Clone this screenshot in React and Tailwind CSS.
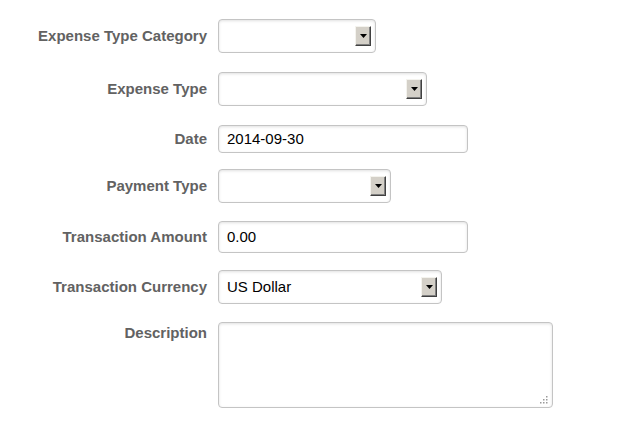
import React from 'react';

const boxBase =
  'rounded-[4px] border border-[#c4c4c4] bg-white shadow-[inset_0_1px_3px_rgba(0,0,0,0.12)]';

const DropButton = () => (
  <span className="flex h-[20px] w-[16px] items-center justify-center border border-t-[#f4f3ee] border-l-[#f4f3ee] border-r-[#404040] border-b-[#404040] bg-[#d4d0c8] shadow-[inset_-1px_-1px_0_#808080]">
    <svg width="7" height="4" viewBox="0 0 7 4">
      <path d="M0 0h7L3.5 4z" fill="#000" />
    </svg>
  </span>
);

const Select = ({ width, value }) => (
  <div className={`flex h-[34px] items-center justify-between pl-2 pr-[4px] ${boxBase} ${width}`}>
    <span className="text-[15px] text-black">{value}</span>
    <DropButton />
  </div>
);

const TextBox = ({ value, height }) => (
  <div className={`flex w-[250px] items-center pl-2 ${height} ${boxBase}`}>
    <span className="text-[15px] text-black">{value}</span>
  </div>
);

const Row = ({ label, children, top }) => (
  <div className={`flex gap-[11px] ${top ? 'items-start' : 'items-center'}`}>
    <label className={`w-[207px] shrink-0 text-right text-[15px] font-bold text-[#626262] ${top ? 'pt-[0px]' : ''}`}>
      {label}
    </label>
    {children}
  </div>
);

const App = () => {
  return (
    <div
      className="h-[442px] w-[629px] bg-white pt-[19px]"
      style={{ fontFamily: '"Liberation Sans", Arial, sans-serif' }}
    >
      <div className="flex flex-col">
        <Row label="Expense Type Category">
          <Select width="w-[158px]" />
        </Row>
        <div className="mt-[19px]">
          <Row label="Expense Type">
            <Select width="w-[209px]" />
          </Row>
        </div>
        <div className="mt-[19px]">
          <Row label="Date">
            <TextBox value="2014-09-30" height="h-[28px]" />
          </Row>
        </div>
        <div className="mt-[16px]">
          <Row label="Payment Type">
            <Select width="w-[173px]" />
          </Row>
        </div>
        <div className="mt-[18px]">
          <Row label="Transaction Amount">
            <TextBox value="0.00" height="h-[32px]" />
          </Row>
        </div>
        <div className="mt-[17px]">
          <Row label="Transaction Currency">
            <Select width="w-[224px]" value="US Dollar" />
          </Row>
        </div>
        <div className="mt-[18px]">
          <Row label="Description" top>
            <div className={`relative h-[86px] w-[335px] ${boxBase}`}>
              {/* resize grip */}
              <svg className="absolute bottom-[3px] right-[4px]" width="10" height="10" viewBox="0 0 10 10">
                <g fill="#9a9a9a">
                  <rect x="8" y="2" width="1.5" height="1.5" />
                  <rect x="5" y="5" width="1.5" height="1.5" />
                  <rect x="8" y="5" width="1.5" height="1.5" />
                  <rect x="2" y="8" width="1.5" height="1.5" />
                  <rect x="5" y="8" width="1.5" height="1.5" />
                  <rect x="8" y="8" width="1.5" height="1.5" />
                </g>
              </svg>
            </div>
          </Row>
        </div>
      </div>
    </div>
  );
};

export default App;
